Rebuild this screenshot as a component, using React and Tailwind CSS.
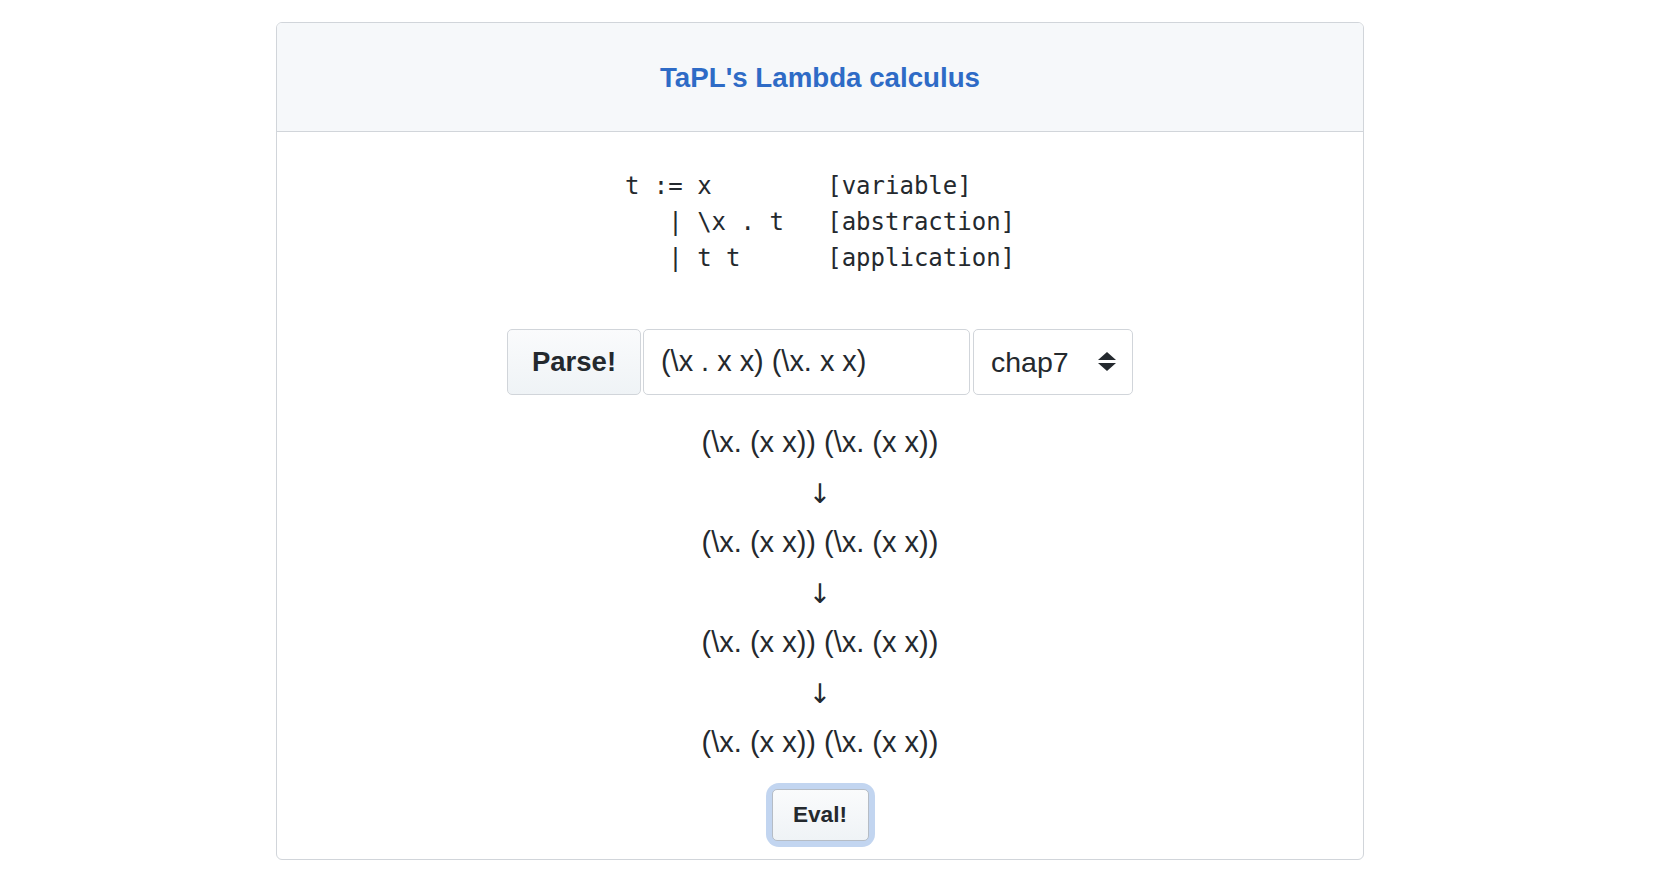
import React from "react";

const sans = { fontFamily: '"Liberation Sans", Arial, sans-serif' };
const mono = { fontFamily: '"DejaVu Sans Mono", "Liberation Mono", monospace' };

function Expr() {
  return (
    <div className="h-[50px] leading-[50px] text-[29px] text-[#24292e] text-center">
      {"(\\x. (x x)) (\\x. (x x))"}
    </div>
  );
}

function Arrow() {
  return (
    <div
      className="h-[50px] pt-[4px] leading-[46px] text-[27px] text-[#24292e] text-center"
      style={{ fontFamily: '"DejaVu Sans", sans-serif' }}
    >
      ↓
    </div>
  );
}

export default function App() {
  return (
    <div className="min-h-[888px] bg-white pt-[22px]" style={sans}>
      <div className="ml-[276px] w-[1088px] border border-[#d1d5da] rounded-[6px] overflow-hidden">
        <div className="h-[109px] bg-[#f6f8fa] border-b border-[#d1d5da] flex items-center justify-center pt-[1px]">
          <h1 className="text-[27.7px] font-bold text-[#2e6bc6]">TaPL's Lambda calculus</h1>
        </div>
        <div className="flex flex-col items-center pt-[36px] pb-[18px]">
          <pre className="text-[24px] leading-[36px] text-[#24292e]" style={mono}>
{`t := x        [variable]
   | \\x . t   [abstraction]
   | t t      [application]`}
          </pre>
          <div className="flex items-stretch mt-[53px] h-[66px]">
            <button className="w-[134px] rounded-[5px] border border-[#d1d5da] bg-gradient-to-b from-[#fafbfc] to-[#eff3f6] text-[27.5px] font-bold text-[#24292e]">
              Parse!
            </button>
            <div className="ml-[2px] w-[327px] rounded-[5px] border border-[#d1d5da] bg-white flex items-center pl-[17px] text-[28.9px] text-[#24292e]">
              {"(\\x . x x) (\\x. x x)"}
            </div>
            <div className="ml-[3px] w-[160px] rounded-[5px] border border-[#d1d5da] bg-white flex items-center justify-between pl-[17px] pr-[15px] text-[28.5px] text-[#24292e]">
              <span>chap7</span>
              <svg width="20" height="20" viewBox="0 0 20 20" fill="#24292e">
                <path d="M10 0 L19 8 L1 8 Z" />
                <path d="M1 11 L19 11 L10 19 Z" />
              </svg>
            </div>
          </div>
          <div className="mt-[22px] flex flex-col">
            <Expr />
            <Arrow />
            <Expr />
            <Arrow />
            <Expr />
            <Arrow />
            <Expr />
          </div>
          <div className="mt-[22px] rounded-[7px] shadow-[0_0_0_6px_#c2d5f0]">
            <button className="w-[97px] h-[52px] rounded-[5px] border border-[#b5bcc5] bg-gradient-to-b from-[#fafbfc] to-[#eff3f6] text-[22.6px] font-bold text-[#24292e]">
              Eval!
            </button>
          </div>
        </div>
      </div>
    </div>
  );
}
